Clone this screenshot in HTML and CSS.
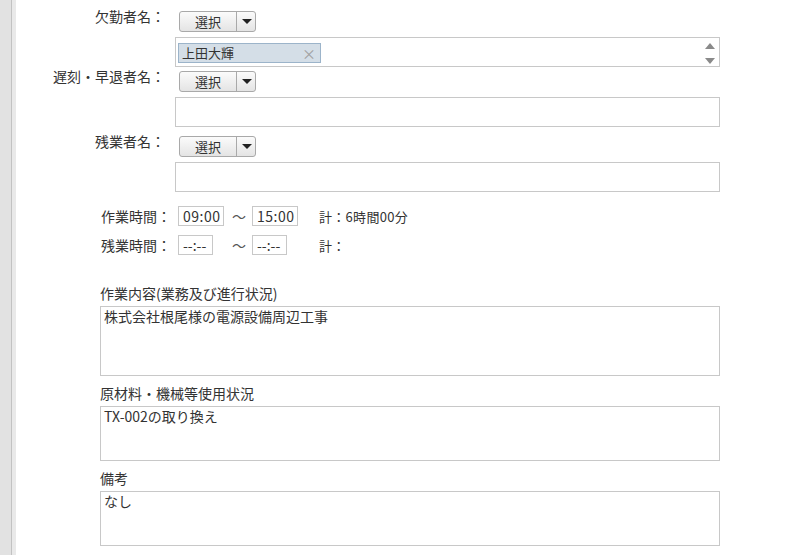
FILE: index.html
```html
<!DOCTYPE html>
<html lang="ja">
<head>
    <meta charset="UTF-8">
    <title>作業日報</title>
    <link rel="stylesheet" href="styles.css">
</head>
<body>

<div class="page">
    <div class="sidebar"></div>

    <div class="report">
        <div class="person-row first">
            <div class="person-label">欠勤者名：</div>
            <div class="person-field">
                <div class="picker">
                    <span class="picker-main">選択</span>
                    <span class="picker-arrow"></span>
                </div>
                <div class="person-box">
                    <span class="tag">上田大輝<span class="tag-close">×</span></span>
                    <svg class="spinner" width="12" height="24" viewBox="0 0 12 24">
                        <path d="M1 9 L6 3 L11 9 Z" fill="#8a8a8a"/>
                        <path d="M1 18 L6 24 L11 18 Z" fill="#8a8a8a"/>
                    </svg>
                </div>
            </div>
        </div>

        <div class="person-row">
            <div class="person-label">遅刻・早退者名：</div>
            <div class="person-field">
                <div class="picker">
                    <span class="picker-main">選択</span>
                    <span class="picker-arrow"></span>
                </div>
                <div class="person-box"></div>
            </div>
        </div>

        <div class="person-row third">
            <div class="person-label">残業者名：</div>
            <div class="person-field">
                <div class="picker">
                    <span class="picker-main">選択</span>
                    <span class="picker-arrow"></span>
                </div>
                <div class="person-box"></div>
            </div>
        </div>

        <div class="times">
            <div class="time-row">
                <span class="time-label">作業時間：</span>
                <span><span class="time-input">09:00</span></span>
                <span class="tilde">～</span>
                <span><span class="time-input">15:00</span></span>
                <span class="total">計：6時間00分</span>
            </div>
            <div class="time-row">
                <span class="time-label">残業時間：</span>
                <span><span class="time-input empty">--:--</span></span>
                <span class="tilde">～</span>
                <span><span class="time-input empty">--:--</span></span>
                <span class="total">計：</span>
            </div>
        </div>

        <div class="notes">
            <div class="note-label">作業内容(業務及び進行状況)</div>
            <div class="note-box tall">株式会社根尾様の電源設備周辺工事</div>

            <div class="note-label">原材料・機械等使用状況</div>
            <div class="note-box">TX-002の取り換え</div>

            <div class="note-label">備考</div>
            <div class="note-box">なし</div>
        </div>
    </div>
</div>

</body>
</html>
```

FILE: styles.css
```css
body {
    margin: 0;
    font-family: "Noto Sans CJK JP", "Noto Sans", sans-serif;
    font-size: 14px;
    color: #333;
    background-color: #fff;
}

.page {
    display: flex;
    min-height: 555px;
}

.sidebar {
    width: 16px;
    flex-shrink: 0;
    background: linear-gradient(to right, #e2e2e2 0, #e2e2e2 11px, #c2c2c2 11px, #c2c2c2 12px, #e9e9e9 12px);
}

.report {
    width: 704px;
    padding-top: 7px;
}

/* person pickers */
.person-row {
    display: grid;
    grid-template-columns: 159px 545px;
}

.person-row.third {
    margin-top: 5px;
}

.person-label {
    text-align: right;
    padding-right: 10px;
    line-height: 20px;
    margin-top: -1px;
}

.person-field {
    padding-top: 4px;
}

.picker {
    display: inline-flex;
    margin-left: 4px;
    height: 21px;
    box-sizing: border-box;
    border: 1px solid #a9a9a9;
    border-radius: 3px;
    background: linear-gradient(#fbfbfb, #e4e4e4);
    font-size: 13px;
    line-height: 19px;
    vertical-align: top;
}

.picker-main {
    width: 56px;
    text-align: center;
    border-right: 1px solid #a9a9a9;
}

.picker-arrow {
    width: 18px;
    position: relative;
}

.picker-arrow::after {
    content: "";
    position: absolute;
    left: 5px;
    top: 7px;
    border-left: 5px solid transparent;
    border-right: 5px solid transparent;
    border-top: 5px solid #222;
}

.person-box {
    margin-top: 5px;
    height: 30px;
    box-sizing: border-box;
    border: 1px solid #c8c8c8;
    position: relative;
    padding: 4px 0 0 2px;
}

.tag {
    display: inline-flex;
    justify-content: space-between;
    width: 143px;
    height: 20px;
    box-sizing: border-box;
    padding: 0 4px 0 3px;
    background-color: #d4dee7;
    border: 1px solid #9cb4ca;
    font-size: 13px;
    line-height: 18px;
}

.tag-close {
    color: #a0a0a0;
    font-size: 14px;
}

.spinner {
    position: absolute;
    right: 3px;
    top: 2px;
}

/* times */
.times {
    margin-top: 14px;
    padding-left: 84px;
}

.time-row {
    display: grid;
    grid-template-columns: 78px 54px 20px 67px auto;
    align-items: center;
    height: 20px;
    margin-bottom: 9px;
}

.time-label {
    padding-left: 1px;
}

.time-input {
    display: inline-block;
    width: 46px;
    height: 20px;
    box-sizing: border-box;
    border: 1px solid #c8c8c8;
    padding: 0 4px;
    line-height: 18px;
    font-size: 14px;
    letter-spacing: 0.5px;
}

.time-input.empty {
    width: 35px;
    letter-spacing: 0;
}

.tilde {
    color: #555;
}

.total {
    font-size: 13px;
    letter-spacing: 0.3px;
}

/* notes */
.notes {
    margin-top: 28px;
    padding-left: 84px;
}

.note-label {
    line-height: 20px;
    margin-top: 7px;
    margin-bottom: 3px;
}

.notes .note-label:first-child {
    margin-top: 0;
}

.note-box {
    width: 620px;
    height: 55px;
    box-sizing: border-box;
    border: 1px solid #c8c8c8;
    padding: 0 3px;
    line-height: 18px;
}

.note-box.tall {
    height: 70px;
}
```
